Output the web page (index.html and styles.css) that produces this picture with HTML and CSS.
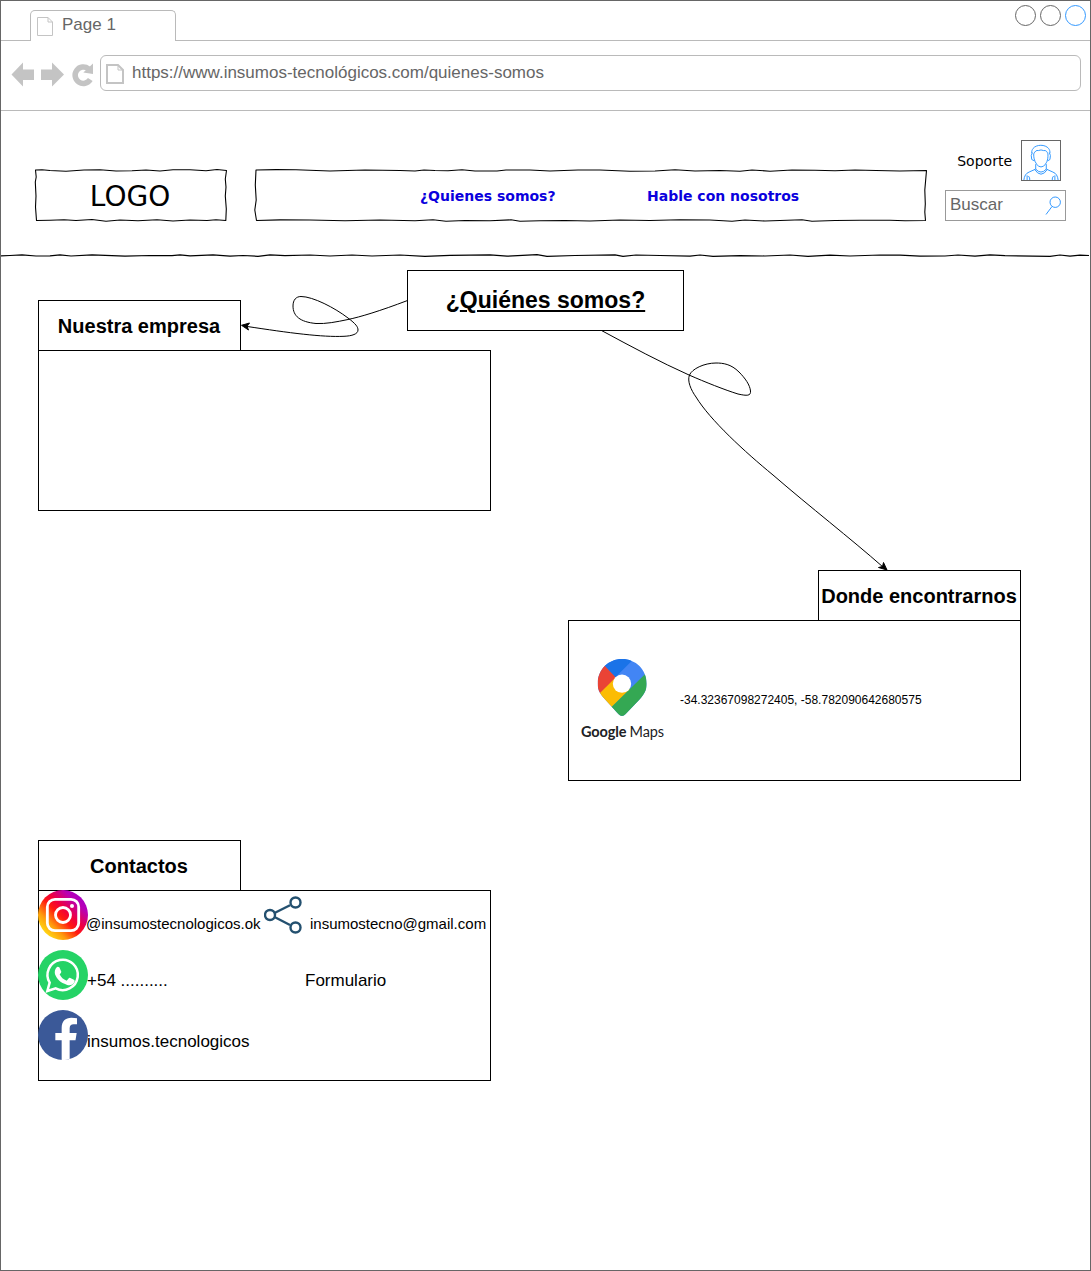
FILE: index.html
```html
<!DOCTYPE html>
<html lang="es">
<head>
<meta charset="utf-8">
<title>¿Quiénes somos?</title>
<link rel="stylesheet" href="styles.css">
</head>
<body>
<div class="window">
  <div class="tabbar">
    <div class="tab">
      <svg class="tab-icon" viewBox="0 0 16 19"><path d="M.5.5h10.500l4.500 4.500v13.500h-15zM11 .5v4.500h4.500"/></svg>
      <span class="tab-label">Page 1</span>
    </div>
    <div class="controls"><i class="dot"></i><i class="dot"></i><i class="dot dot-blue"></i></div>
  </div>
  <div class="toolbar">
    <svg class="nav-icons" viewBox="11 61 84 28">
      <path class="fill" d="M11.500 74.500 23 62.500V69.500H34V80H23V86.500ZM64 74.500 52 62.500V69.500H41V80H52V86.500Z"/>
      <path class="reload" d="M90.300 79.500A8.200 8.200 0 1 1 88.500 68.800"/>
      <path class="fill" d="M93 63.500 93 74 83.300 72.500Z"/>
    </svg>
    <div class="address">
      <svg class="address-icon" viewBox="0 0 18 20"><path d="M1 1h11l5 5v13H1z"/><path class="fold" d="M12 1v5h5"/></svg>
      <span class="url">https://www.insumos-tecnológicos.com/quienes-somos</span>
    </div>
  </div>

  <header class="header">
    <div class="sketch logo">
      <svg class="outline" viewBox="34 168 194 55"><path d="M35.500 170 L42 169.700 50 170.500 66 171.200 84 170 100 169.800 116 171 132 170.800 146 170 160 171 173 169.800 190 169.700 206 170.800 217 169.500 226.500 170.500 225.300 179 226 187 225.300 196 226.300 209 225.800 220.500 216 219.800 207 220.500 190 220 173 221 157 219.800 138 220.800 120 220 106 221.200 92 219.500 76 220.500 64 219.800 50 220.200 36.500 220.500 35.500 207 36 196 35.300 182 36.200 177Z"/></svg>
      <span class="logo-text">LOGO</span>
    </div>
    <nav class="sketch menu">
      <svg class="outline" viewBox="254 168 674 55"><path d="M256 170 L276 169.600 296 169.700 330 171 365 170 400 170.500 415 171 424 170 435 170.500 448 170.800 462 169.700 475 171 497 171 506 170 530 170 550 171 578 170 600 170 630 171.200 655 171 675 169.800 695 171 720 170.500 740 171.300 752 170 770 171.200 792 170 815 170.200 835 170.800 855 170 876 170.500 900 171 926.500 170.500 924.800 190 925.300 204 924.800 212 925.500 220.500 905 220.800 890 220.300 860 220.300 835 220.500 812 221.300 802 219.800 780 220.500 765 221 745 220 732 221.300 710 220 680 219.800 650 220.500 620 220 590 221 565 220.500 540 220.800 520 221.300 511 219.800 490 220.800 465 220.500 446 221.300 433 219.800 415 220.800 380 220 345 220.800 310 220 280 219.900 256.500 220.500 254.800 210 256.200 200 255.300 185Z"/></svg>
      <a class="menu-link first">¿Quienes somos?</a>
      <a class="menu-link second">Hable con nosotros</a>
    </nav>
    <div class="tools">
      <div class="support">
        <span class="support-label">Soporte</span>
        <svg class="avatar" viewBox="278 62 114 118">
          <path d="M307 99C304 67 365 67 362 99M313 101C317 93 321 89 327 91Q335 87 343 91C350 89 354 95 356 101M313 101C312 120 321 132 327 138Q335 143 343 138C351 130 357 121 356 101M309 97Q303 104 307 118L315 122M360 97Q366 104 362 118L355 122M319 132V147Q335 165 351 147V132M315 147Q335 178 355 147M319 147L299 156Q285 161 283 181M351 147L371 156Q385 161 387 181M297 168Q302 173 301 181M373 168Q368 173 369 181M293 166V181M377 166V181"/>
        </svg>
      </div>
      <div class="search">
        <span class="search-label">Buscar</span>
        <svg class="lens" viewBox="0 0 17 20"><circle cx="10.200" cy="6.200" r="5.200"/><path d="M7 10.500 1 18.500"/></svg>
      </div>
    </div>
    <svg class="rule" viewBox="1 252 1089 8"><path d="M1 255.800 L10 255.500 22 254.900 36 256 50 255.800 60 254.800 71 256 92 254.900 125 256.200 150 255.500 172 255.700 180 254.800 190 255.800 213 254.900 230 256.200 243 255.500 258 256.300 270 254.900 285 255.600 310 255 330 256 352 255 372 256 400 255 425 256.300 450 255.300 490 254.800 507 256.200 537 254.700 547 256.300 575 255.500 615 254.900 623 256.400 636 255 660 255.500 690 256.200 700 255 713 256.300 740 255.700 765 256 790 255 808 256.300 830 255.200 850 256 880 255 900 255.200 920 256.200 945 256 958 255 975 256.200 990 254.900 1005 255.700 1050 256.300 1060 255 1070 256.200 1080 255.200 1089 255.500"/></svg>
  </header>

  <main class="canvas">
    <svg class="connectors" viewBox="1 255 1089 1015">
      <path class="wire" d="M407.500 300.500C380 311 360 317 348 319.500C336 322 326 324 316 323.500C300 322 293 316 293 306C293 300 296 296.500 301 296.500C313 296.500 335 308 348 318C356 324 358 327 358 330C358 334 352 336 344 336.300C322 337.300 290 333 246 326.300"/>
      <path class="tip" d="M241.500 325.300 249.500 323 247 326.300 248.500 330Z"/>
      <path class="wire" d="M601.500 330.500C632 347 660 362 689 375C705 382 725 390 738 394C747 396 751 396 750.500 391C750 385 745 378 739 372C731 364 723 363 716 363C704 363 692 369 689.500 375C687 381 691 390 696 397C710 420 745 452 773 475C810 507 850 538 883 567"/>
      <path class="tip" d="M887 570 878.500 567.500 882.500 566.500 883.500 562.500Z"/>
    </svg>

    <h1 class="node title"><span>¿<u>Quiénes somos?</u></span></h1>

    <section class="node card company">
      <h2 class="card-tab">Nuestra empresa</h2>
      <div class="card-body"></div>
    </section>

    <section class="node card location">
      <h2 class="card-tab">Donde encontrarnos</h2>
      <div class="card-body place">
        <div class="maps">
          <svg class="pin" viewBox="111 297 150 174">
            <defs><clipPath id="pin-shape"><path d="M186 297C227 297 260 329 260 371C260 390 252 403 240 417L197 462Q186 474 175 462L134 417C121 403 113 390 113 371C113 329 145 297 186 297Z"/></clipPath></defs>
            <g clip-path="url(#pin-shape)">
              <path fill="#4285f4" d="M100 290H270V480H100Z"/>
              <path fill="#1a73e8" d="M130 313 160 280H238L165 353Z"/>
              <path fill="#ea4335" d="M134 317 165 350 166 357 110 410 90 350Z"/>
              <path fill="#fbbc04" d="M166 353 110 409 153 443 210 388Z"/>
              <path fill="#34a853" d="M258 340 270 350V480H140V455Z"/>
            </g>
            <circle cx="186" cy="371" r="27.500" fill="#fff"/>
          </svg>
          <div class="maps-name"><b>Google</b> <span>Maps</span></div>
        </div>
        <span class="coords">-34.32367098272405, -58.782090642680575</span>
      </div>
    </section>

    <section class="node card contacts">
      <h2 class="card-tab">Contactos</h2>
      <div class="card-body contact-grid">
        <div class="contact">
          <svg class="badge" viewBox="0 0 150 150">
            <defs><linearGradient id="ig" x1=".1" y1=".85" x2=".85" y2=".1"><stop offset="0" stop-color="#ffdd15"/><stop offset=".22" stop-color="#ff9b0c"/><stop offset=".45" stop-color="#ff1a10"/><stop offset=".6" stop-color="#f0003c"/><stop offset=".85" stop-color="#b900b4"/><stop offset="1" stop-color="#a800c4"/></linearGradient></defs>
            <circle cx="75" cy="75" r="75" fill="url(#ig)"/>
            <g fill="none" stroke="#fff" stroke-width="8.500"><rect x="28" y="28" width="94" height="94" rx="23"/><circle cx="75" cy="75" r="22.500"/></g>
            <circle cx="102" cy="48" r="6" fill="#fff"/>
          </svg>
          <span class="contact-text instagram">@insumostecnologicos.ok</span>
        </div>
        <div class="contact side">
          <svg class="share" viewBox="0 0 38 38"><path d="M10.500 17 26 9.200M10.500 21 26 29"/><circle cx="6" cy="19" r="5"/><circle cx="31.500" cy="6.500" r="5"/><circle cx="31.500" cy="31.500" r="5"/></svg>
          <span class="contact-text mail">insumostecno@gmail.com</span>
        </div>
        <div class="contact">
          <svg class="badge" viewBox="0 0 150 150">
            <circle cx="75" cy="75" r="75" fill="#25d366"/>
            <path d="M28 123 35 98A45.500 45.500 0 1 1 53 115Z" fill="none" stroke="#fff" stroke-width="7.500"/>
            <path fill="#fff" d="M57 51Q60 49 64 52L70 65Q70 68 65 73Q71 87 86 92L93 84Q95 83 97 84L109 90Q111 92 109 97C105 105 95 108 86 104C68 99 57 88 51 73Q48 60 57 51Z"/>
          </svg>
          <span class="contact-text phone">+54 ..........</span>
        </div>
        <div class="contact side"><span class="contact-text form">Formulario</span></div>
        <div class="contact">
          <svg class="badge" viewBox="0 0 150 150">
            <circle cx="75" cy="75" r="75" fill="#3b5998"/>
            <path fill="#fff" d="M71 150V91H52V69H71V53C71 33 82 23 100 23Q110 23 117 24.500V43H107Q95 43 95 55V69H116L112.500 91H95V147Q83 151 71 150Z"/>
          </svg>
          <span class="contact-text facebook">insumos.tecnologicos</span>
        </div>
      </div>
    </section>
  </main>
</div>
</body>
</html>
```
FILE: styles.css
```css
* { box-sizing: border-box; }
body { margin: 0; background: #fff; color: #000; font-family: "Liberation Sans", Arial, sans-serif; }
svg { display: block; flex: none; }
span, a { white-space: nowrap; }

.window { width: 1091px; height: 1271px; border: 1px solid #666; display: flex; flex-direction: column; overflow: hidden; }

/* browser chrome */
.tabbar { height: 40px; flex: none; display: flex; justify-content: space-between; align-items: flex-end; padding: 0 4px 0 29px; border-bottom: 1px solid #bababa; }
.tab { width: 146px; height: 31px; margin-bottom: -1px; padding: 6px 0 0 6px; display: flex; gap: 9px; border: 1px solid #bababa; border-bottom: 0; border-radius: 5px 5px 0 0; background: #fff; }
.tab-icon { width: 16px; height: 19px; fill: none; stroke: #c4c4c4; }
.tab-label { font-size: 17px; line-height: 19px; color: #666; margin-top: -2px; }
.controls { align-self: flex-start; display: flex; gap: 4px; padding-top: 4px; }
.dot { width: 21px; height: 21px; border: 1px solid #666; border-radius: 50%; }
.dot-blue { border-color: #3399ff; }
.toolbar { height: 70px; flex: none; display: flex; align-items: flex-start; gap: 5px; padding: 14px 9px 0 10px; border-bottom: 1px solid #bababa; }
.nav-icons { width: 84px; height: 28px; margin-top: 6px; }
.fill { fill: #c4c4c4; }
.reload { fill: none; stroke: #c4c4c4; stroke-width: 5.500px; }
.address { flex: 1; height: 36px; display: flex; gap: 8px; padding: 8px 0 0 5px; border: 1px solid #bababa; border-radius: 6px; }
.address-icon { width: 18px; height: 20px; fill: none; stroke: #c4c4c4; stroke-width: 2px; }
.fold { stroke-width: 1px; }
.url { font-size: 17px; line-height: 19px; color: #666; margin-top: -1px; }

/* site header */
.header { position: relative; height: 144px; flex: none; display: flex; align-items: flex-start; padding: 29px 24px 0 33px; font-family: "DejaVu Sans", Verdana, sans-serif; }
.sketch { position: relative; height: 55px; margin-top: 28px; display: flex; align-items: center; }
.outline { position: absolute; inset: 0; width: 100%; height: 100%; fill: none; stroke: #000; stroke-width: 1.100px; stroke-linejoin: round; }
.logo { width: 194px; padding: 2px 2px 0 0; justify-content: center; }
.logo-text { font-size: 28px; }
.menu { width: 674px; margin-left: 26px; padding-left: 166px; }
.menu-link { font-size: 14px; font-weight: bold; color: #0a00dd; }
.menu-link.first { width: 227px; }
.tools { width: 121px; margin-left: 17px; display: flex; flex-direction: column; gap: 9px; }
.support { display: flex; justify-content: flex-end; align-items: center; gap: 9px; padding-right: 5px; }
.support-label { font-size: 14px; }
.avatar { width: 40px; height: 41px; border: 1px solid #666; fill: none; stroke: #3399ff; stroke-width: 3px; }
.search { height: 31px; display: flex; justify-content: space-between; padding: 5px 3px 0 4px; border: 1px solid #999; font-family: "Liberation Sans", Arial, sans-serif; }
.search-label { font-size: 17px; line-height: 19px; color: #666; margin-top: -1px; }
.lens { width: 17px; height: 20px; fill: none; stroke: #3399ff; }
.rule { position: absolute; left: 0; top: 141px; width: 1089px; height: 8px; fill: none; stroke: #000; stroke-width: 1.200px; stroke-linejoin: round; }

/* diagram */
.canvas { position: relative; flex: 1; }
.connectors { position: absolute; inset: 0; width: 1089px; height: 1015px; }
.wire { fill: none; stroke: #000; }
.tip { stroke: #000; }
.node { position: absolute; margin: 0; }
.title { left: 406px; top: 15px; width: 277px; height: 61px; display: flex; align-items: center; justify-content: center; border: 1px solid #000; background: #fff; font-size: 23px; }
.title u { text-decoration-thickness: 2px; text-underline-offset: 2px; }
.card { width: 453px; display: flex; flex-direction: column; align-items: flex-start; }
.card-tab { width: 203px; height: 51px; margin: 0 0 -1px; padding: 2px 1px 0 0; display: flex; align-items: center; justify-content: center; border: 1px solid #000; font-size: 20px; white-space: nowrap; }
.card-body { width: 453px; height: 161px; border: 1px solid #000; }
.company { left: 37px; top: 45px; }
.location { left: 567px; top: 315px; align-items: flex-end; }
.contacts { left: 37px; top: 585px; }
.place { display: flex; align-items: center; padding-left: 12px; gap: 16px; }
.maps { width: 83px; display: flex; flex-direction: column; align-items: flex-start; gap: 6px; padding-bottom: 1px; }
.pin { width: 50px; height: 58px; margin-left: 16px; }
.maps-name { width: 83px; display: flex; justify-content: space-between; font: 14.5px/18px Lato, sans-serif; letter-spacing: -.1px; color: #202124; }
.coords { font-size: 12px; margin-top: -2px; }
.contact-grid { height: 191px; display: grid; grid-template-columns: 226px 1fr; grid-template-rows: 50px 50px 50px; row-gap: 10px; }
.contact { display: flex; margin: -1px 0 1px -1px; }
.badge { width: 50px; height: 50px; }
.share { width: 38px; height: 38px; margin-top: 6px; fill: none; stroke: #23506f; stroke-width: 2.400px; }
.contact-text { font-size: 17px; line-height: 20px; }
.instagram { font-size: 15px; margin: 24px 0 0 -2px; }
.mail { font-size: 15px; margin: 24px 0 0 8px; }
.phone { margin: 21px 0 0 -1px; }
.form { margin: 21px 0 0 41px; }
.facebook { margin: 22px 0 0 -1px; }
```
